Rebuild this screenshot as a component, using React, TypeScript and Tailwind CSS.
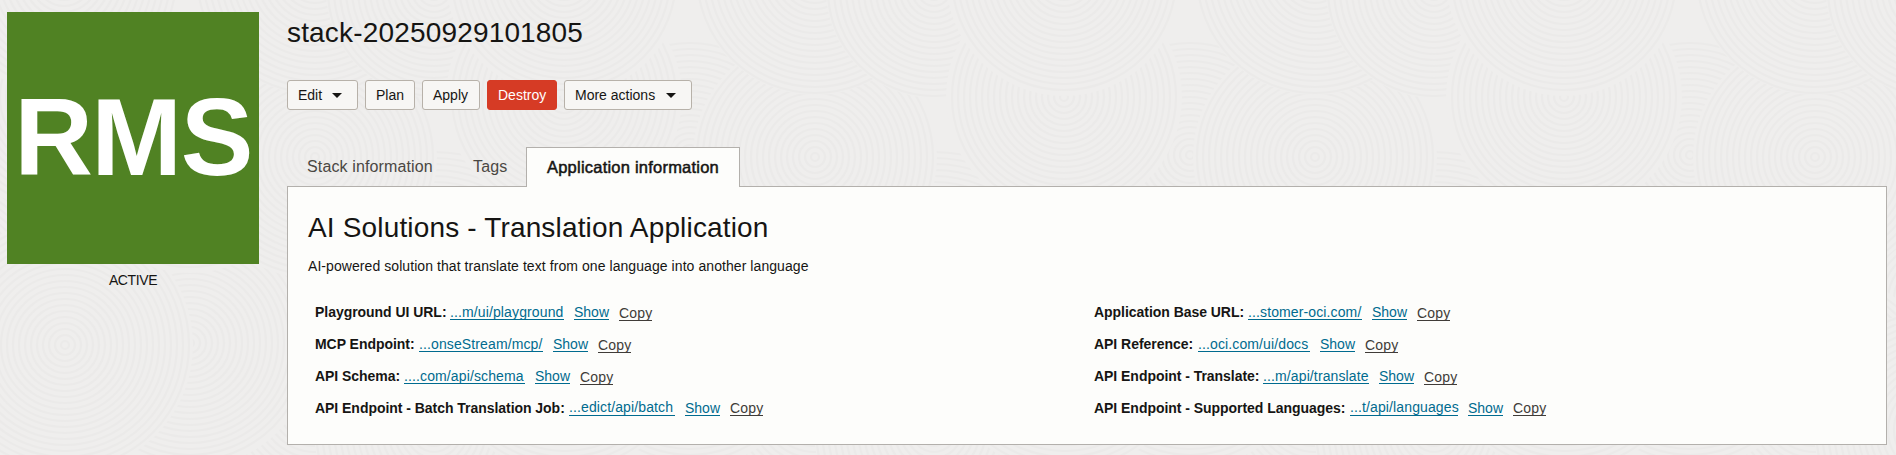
import type { ReactNode } from "react";

type Endpoint = {
  label: string;
  link: string;
  labelWidth: string;
  linkWidth: string;
};

const leftColumn: Endpoint[] = [
  { label: "Playground UI URL:", link: "...m/ui/playground", labelWidth: "w-[135px]", linkWidth: "w-[114px]" },
  { label: "MCP Endpoint:", link: "...onseStream/mcp/", labelWidth: "w-[104px]", linkWidth: "w-[124px]" },
  { label: "API Schema:", link: "....com/api/schema", labelWidth: "w-[89px]", linkWidth: "w-[121px]" },
  { label: "API Endpoint - Batch Translation Job:", link: "...edict/api/batch", labelWidth: "w-[254px]", linkWidth: "w-[106px]" },
];

const rightColumn: Endpoint[] = [
  { label: "Application Base URL:", link: "...stomer-oci.com/", labelWidth: "w-[154px]", linkWidth: "w-[114px]" },
  { label: "API Reference:", link: "...oci.com/ui/docs", labelWidth: "w-[104px]", linkWidth: "w-[112px]" },
  { label: "API Endpoint - Translate:", link: "...m/api/translate", labelWidth: "w-[169px]", linkWidth: "w-[106px]" },
  { label: "API Endpoint - Supported Languages:", link: "...t/api/languages", labelWidth: "w-[256px]", linkWidth: "w-[108px]" },
];

// Overlapping ring groups, painted back to front.
const discs = [
  [190, 220, 150],
  [434, 300, 150],
  [315, 400, 130],
  [434, 430, 120],
  [190, 343, 125],
  [65, 345, 128],
  [190, 155, 118],
  [315, 157, 122],
  [315, -25, 120],
  [64, 97, 118],
  [434, -10, 108],
  [64, -22, 118],
];

function Backdrop() {
  return (
    <svg className="absolute inset-0 h-full w-full" aria-hidden="true">
      <defs>
        <g id="rings">
          {discs.map(([cx, cy, r]) => (
            <g key={`${cx}-${cy}`} fill="none" stroke="#ebeae9" strokeWidth="2.2">
              <circle cx={cx} cy={cy} r={r} fill="#efeeed" stroke="none" />
              {Array.from({ length: Math.floor(r / 6) }, (_, i) => (
                <circle key={i} cx={cx} cy={cy} r={4 + i * 6} />
              ))}
            </g>
          ))}
        </g>
      </defs>
      {[-500, 0, 500, 1000, 1500].map((x) => (
        <use key={x} href="#rings" x={x} />
      ))}
    </svg>
  );
}

function Button({ children, className }: { children: ReactNode; className: string }) {
  return (
    <button className={`flex h-[30px] items-center rounded-[3px] border px-[10px] text-[14px] leading-none ${className}`}>
      {children}
    </button>
  );
}

function Caret() {
  return (
    <svg width="10" height="5" viewBox="0 0 10 5" className="mt-px" aria-hidden="true">
      <path d="M0 0h10L5 5z" fill="#161513" />
    </svg>
  );
}

function Row({ item, last }: { item: Endpoint; last: boolean }) {
  const link = "border-b border-[#006b8f] text-[#006b8f]";
  return (
    <div className="flex h-8 items-start whitespace-nowrap text-[14px] leading-[15px]">
      <span className={`shrink-0 pt-px font-bold tracking-[-0.04px] ${item.labelWidth}`}>{item.label}</span>
      <a className={`mr-[10px] shrink-0 tracking-[0.12px] ${last ? "leading-[15px]" : "pt-px leading-[14px]"} ${link} ${item.linkWidth}`}>{item.link}</a>
      <a className={`mr-[10px] w-[35px] pt-px leading-[14px] ${link}`}>Show</a>
      <a className={`w-[33px] border-b border-[#403c38] leading-[14px] tracking-[0.15px] text-[#403c38] ${last ? "pt-px" : "pt-[2px]"}`}>Copy</a>
    </div>
  );
}

export default function App() {
  const plain = "border-[#b7b1a9] bg-[#f7f6f4] text-[#161513]";
  return (
    <div className="relative h-[455px] w-full overflow-hidden bg-[#efeeed] font-['Liberation_Sans',Arial,sans-serif] text-[#161513]">
      <Backdrop />
      <div className="relative flex pl-[7px] pr-[9px] pt-3">
        <aside className="flex w-[252px] shrink-0 flex-col items-center">
          <div className="flex h-[252px] w-[252px] items-center justify-center bg-[#508223] pb-px text-[109px] font-bold leading-none tracking-[-1.5px] text-white">
            RMS
          </div>
          <div className="mt-2 text-[14px] leading-4 tracking-[-0.4px]">ACTIVE</div>
        </aside>
        <main className="ml-7 min-w-0 flex-1">
          <h1 className="h-[68px] text-[28px] leading-[41px] tracking-[0.17px]">stack-20250929101805</h1>
          <div className="flex gap-[7px]">
            <Button className={`w-[71px] gap-[10px] ${plain}`}>Edit<Caret /></Button>
            <Button className={`w-[50px] ${plain}`}>Plan</Button>
            <Button className={`w-[58px] ${plain}`}>Apply</Button>
            <Button className="w-[70px] border-[#d63b25] bg-[#d63b25] text-white">Destroy</Button>
            <Button className={`w-[128px] gap-[11px] ${plain}`}>More actions<Caret /></Button>
          </div>
          <nav className="mt-[37px] flex h-[39px] whitespace-nowrap text-[16px] leading-[39px] tracking-[0.13px] text-[#4a4743]">
            <div className="w-[166px] pl-5">Stack information</div>
            <div className="w-[73px] pl-5">Tags</div>
            <div className="relative z-10 h-10 w-[214px] border border-b-0 border-[#b3b0ac] bg-[#fdfdfb] pl-5 text-[16.5px] tracking-[0.22px] text-[#161513] [-webkit-text-stroke:0.5px_#161513]">
              Application information
            </div>
          </nav>
          <section className="h-[259px] border border-[#b3b0ac] bg-[#fdfdfb] pl-5 pt-[23px]">
            <h2 className="text-[28px] leading-9 tracking-[0.16px]">AI Solutions - Translation Application</h2>
            <p className="mt-3 text-[14px] leading-4 tracking-[0.07px]">AI-powered solution that translate text from one language into another language</p>
            <div className="mt-[30px] grid grid-cols-[779px_1fr] pl-[7px]">
              {[leftColumn, rightColumn].map((column, c) => (
                <div key={c}>
                  {column.map((item, i) => (
                    <Row key={item.label} item={item} last={i === 3} />
                  ))}
                </div>
              ))}
            </div>
          </section>
        </main>
      </div>
    </div>
  );
}
